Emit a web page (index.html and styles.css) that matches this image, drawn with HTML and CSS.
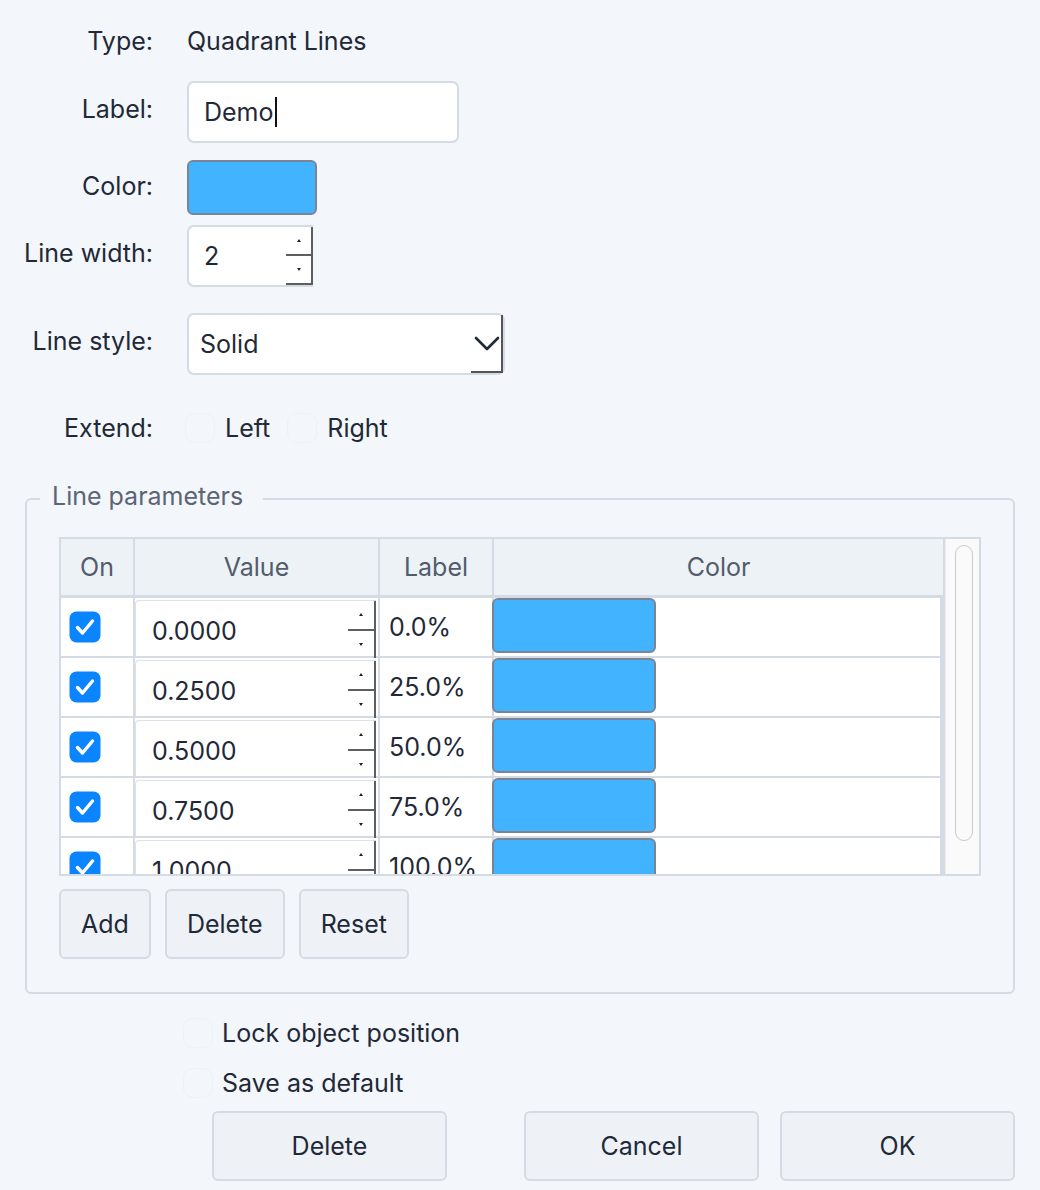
FILE: index.html
```html
<!DOCTYPE html>
<html>
<head>
<meta charset="utf-8">
<link rel="stylesheet" href="styles.css">
</head>
<body>
<div class="dialog">
  <div class="form">
    <div class="row r-type"><div class="lbl">Type:</div><div class="val">Quadrant Lines</div></div>
    <div class="row r-label"><div class="lbl">Label:</div><div class="textbox">Demo<span class="caret"></span></div></div>
    <div class="row r-color"><div class="lbl">Color:</div><div class="swatch big"></div></div>
    <div class="row r-width"><div class="lbl">Line width:</div>
      <div class="spinbox"><span class="num">2</span>
        <div class="spin"><div class="half"><span class="arr up"></span></div><div class="half"><span class="arr down"></span></div></div>
      </div>
    </div>
    <div class="row r-style"><div class="lbl">Line style:</div>
      <div class="select"><span>Solid</span>
        <div class="drop"><svg width="26" height="16" viewBox="0 0 26 16"><path d="M2 3 L13 14 L24 3" fill="none" stroke="#1f2937" stroke-width="2.6" stroke-linecap="round" stroke-linejoin="round"/></svg></div>
      </div>
    </div>
    <div class="row r-extend"><div class="lbl">Extend:</div>
      <div class="checks"><label class="chk"><span class="faint"></span>Left</label><label class="chk"><span class="faint"></span>Right</label></div>
    </div>
  </div>

  <fieldset class="params">
    <legend>Line parameters</legend>
    <div class="tablebox">
      <div class="tablemain">
        <div class="thead">
          <div class="th">On</div><div class="th">Value</div><div class="th">Label</div><div class="th">Color</div>
        </div>
        <div class="trow">
          <div class="c-on"><svg class="cb" width="32" height="32" viewBox="0 0 32 32"><rect x="0.5" y="0.5" width="31" height="31" rx="7" fill="#0b84ff"/><path d="M8.5 16.5 L13.5 22 L23.5 10" fill="none" stroke="#fff" stroke-width="3.4" stroke-linecap="round" stroke-linejoin="round"/></svg></div>
          <div class="c-val"><div class="vspin"><span class="num">0.0000</span><div class="spin"><div class="half"><span class="arr up"></span></div><div class="half"><span class="arr down"></span></div></div></div></div>
          <div class="c-lab">0.0%</div>
          <div class="c-col"><div class="swatch"></div></div>
        </div>
        <div class="trow">
          <div class="c-on"><svg class="cb" width="32" height="32" viewBox="0 0 32 32"><rect x="0.5" y="0.5" width="31" height="31" rx="7" fill="#0b84ff"/><path d="M8.5 16.5 L13.5 22 L23.5 10" fill="none" stroke="#fff" stroke-width="3.4" stroke-linecap="round" stroke-linejoin="round"/></svg></div>
          <div class="c-val"><div class="vspin"><span class="num">0.2500</span><div class="spin"><div class="half"><span class="arr up"></span></div><div class="half"><span class="arr down"></span></div></div></div></div>
          <div class="c-lab">25.0%</div>
          <div class="c-col"><div class="swatch"></div></div>
        </div>
        <div class="trow">
          <div class="c-on"><svg class="cb" width="32" height="32" viewBox="0 0 32 32"><rect x="0.5" y="0.5" width="31" height="31" rx="7" fill="#0b84ff"/><path d="M8.5 16.5 L13.5 22 L23.5 10" fill="none" stroke="#fff" stroke-width="3.4" stroke-linecap="round" stroke-linejoin="round"/></svg></div>
          <div class="c-val"><div class="vspin"><span class="num">0.5000</span><div class="spin"><div class="half"><span class="arr up"></span></div><div class="half"><span class="arr down"></span></div></div></div></div>
          <div class="c-lab">50.0%</div>
          <div class="c-col"><div class="swatch"></div></div>
        </div>
        <div class="trow">
          <div class="c-on"><svg class="cb" width="32" height="32" viewBox="0 0 32 32"><rect x="0.5" y="0.5" width="31" height="31" rx="7" fill="#0b84ff"/><path d="M8.5 16.5 L13.5 22 L23.5 10" fill="none" stroke="#fff" stroke-width="3.4" stroke-linecap="round" stroke-linejoin="round"/></svg></div>
          <div class="c-val"><div class="vspin"><span class="num">0.7500</span><div class="spin"><div class="half"><span class="arr up"></span></div><div class="half"><span class="arr down"></span></div></div></div></div>
          <div class="c-lab">75.0%</div>
          <div class="c-col"><div class="swatch"></div></div>
        </div>
        <div class="trow">
          <div class="c-on"><svg class="cb" width="32" height="32" viewBox="0 0 32 32"><rect x="0.5" y="0.5" width="31" height="31" rx="7" fill="#0b84ff"/><path d="M8.5 16.5 L13.5 22 L23.5 10" fill="none" stroke="#fff" stroke-width="3.4" stroke-linecap="round" stroke-linejoin="round"/></svg></div>
          <div class="c-val"><div class="vspin"><span class="num">1.0000</span><div class="spin"><div class="half"><span class="arr up"></span></div><div class="half"><span class="arr down"></span></div></div></div></div>
          <div class="c-lab">100.0%</div>
          <div class="c-col"><div class="swatch"></div></div>
        </div>
      </div>
      <div class="scrollbar"><div class="thumb"></div></div>
    </div>
    <div class="btnrow">
      <button class="btn">Add</button>
      <button class="btn">Delete</button>
      <button class="btn">Reset</button>
    </div>
  </fieldset>

  <div class="opts">
    <label class="opt"><span class="faint"></span><span class="otext">Lock object position</span></label>
    <label class="opt"><span class="faint"></span><span class="otext">Save as default</span></label>
  </div>

  <div class="footer">
    <button class="btn fbtn f-del">Delete</button>
    <button class="btn fbtn f-cancel">Cancel</button>
    <button class="btn fbtn">OK</button>
  </div>
</div>
</body>
</html>
```

FILE: styles.css
```css
* { box-sizing: border-box; }
html, body { margin: 0; padding: 0; }
body {
  background: #f3f6fa;
  font-family: Inter, "Noto Sans", "Liberation Sans", sans-serif;
  font-size: 25px;
  color: #1f2937;
  width: 1040px;
  height: 1190px;
  overflow: hidden;
}

.form { padding-top: 10px; }
.row {
  display: grid;
  grid-template-columns: 153px 1fr;
  column-gap: 34px;
  align-items: center;
}
.lbl { text-align: right; white-space: nowrap; padding-bottom: 6px; }
.r-type { height: 62px; }
.r-type .lbl { padding-bottom: 0; }
.r-label { height: 62px; margin-top: 9px; }
.r-color { height: 55px; margin-top: 17px; }
.r-color .lbl { padding-bottom: 4px; }
.r-width { height: 62px; margin-top: 10px; }
.r-style { height: 62px; margin-top: 26px; }
.r-extend { height: 40px; margin-top: 33px; }
.r-extend .lbl { padding-bottom: 0; }

.textbox {
  width: 272px;
  height: 62px;
  background: #fff;
  border: 2px solid #d5dbe5;
  border-radius: 7px;
  display: flex;
  align-items: center;
  padding-left: 15px;
}
.caret {
  display: inline-block;
  width: 2px;
  height: 30px;
  background: #111;
  margin-left: 1px;
}

.swatch {
  background: #42b4ff;
  border: 2px solid #7b8494;
  border-radius: 6px;
  width: 164px;
  height: 55px;
}
.swatch.big { width: 130px; }

.spinbox {
  width: 126px;
  height: 62px;
  background: #fff;
  border: 2px solid #d5dbe5;
  border-right: 0;
  border-radius: 7px 0 0 7px;
  display: flex;
}
.num { flex: 1; display: flex; align-items: center; padding-left: 15px; }
.spin {
  width: 27px;
  display: flex;
  flex-direction: column;
  border-right: 2px solid #5e5e5e;
}
.half {
  flex: 1;
  display: flex;
  align-items: center;
  justify-content: center;
  border-bottom: 2px solid #5e5e5e;
}
.arr {
  width: 0;
  height: 0;
  border-left: 2.5px solid transparent;
  border-right: 2.5px solid transparent;
}
.arr.up { border-bottom: 3px solid #222; }
.arr.down { border-top: 3px solid #222; }

.select {
  width: 318px;
  height: 62px;
  background: #fff;
  border: 2px solid #d5dbe5;
  border-radius: 7px;
  display: flex;
  align-items: center;
  padding-left: 11px;
}
.drop {
  margin-left: auto;
  width: 32px;
  height: 100%;
  border-right: 2px solid #555;
  border-bottom: 2px solid #555;
  display: flex;
  align-items: center;
  justify-content: center;
  padding-left: 2px;
}

.checks { display: flex; align-items: center; margin-left: -2px; }
.chk { display: flex; align-items: center; margin-right: 17px; }
.faint {
  display: inline-block;
  width: 30px;
  height: 30px;
  border-radius: 10px;
  background: #f3f6fa;
  border: 1px solid #eef1f5;
  margin-right: 10px;
}

.params {
  margin: 36px 25px 0;
  padding: 23px 32px 33px;
  border: 2px solid #d5dbe5;
  border-radius: 6px;
  min-width: 0;
}
.params legend {
  margin-left: -19px;
  padding: 0 20px 6px 12px;
  line-height: 24px;
  color: #5b6575;
}

.tablebox {
  height: 339px;
  border: 2px solid #d5dbe5;
  display: flex;
  background: #fff;
}
.tablemain { width: 884px; overflow: hidden; }
.thead, .trow {
  display: grid;
  grid-template-columns: 74px 245px 114px 451px;
}
.thead {
  height: 59px;
  border-bottom: 3px solid #d5dbe5;
  background: #edf2f7;
}
.th {
  border-right: 2px solid #d5dbe5;
  display: flex;
  align-items: center;
  justify-content: center;
  color: #525c6b;
}
.trow { height: 60px; }
.trow > div {
  border-right: 2px solid #d5dbe5;
  border-bottom: 2px solid #d5dbe5;
  background: #fff;
}
.trow > .c-col { border-right-width: 5px; }
.c-on { display: flex; align-items: center; padding-left: 8px; }
.c-val { display: flex; }
.vspin {
  flex: 1;
  display: flex;
  margin: 2px 2px 0 0;
  border-top: 1px solid #dde2ea;
  border-left: 1px solid #dde2ea;
  border-radius: 4px 0 0 0;
  background: #fff;
}
.vspin .num { padding-left: 16px; padding-top: 4px; }
.vspin .spin { width: 28px; margin-bottom: -2px; }
.vspin .half:last-child { border-bottom: 0; }
.c-lab { display: flex; align-items: center; padding-left: 9px; }
.c-col .swatch { margin-left: -2px; }

.scrollbar {
  width: 34px;
  background: #fafafa;
  border-left: 1px solid #ececec;
  padding: 6px 0 0 9px;
}
.thumb {
  width: 18px;
  height: 296px;
  border: 1.5px solid #c9c9c9;
  border-radius: 9px;
}

.btnrow { margin-top: 13px; display: flex; gap: 14px; }
.btn {
  height: 70px;
  padding: 0 20px;
  font: inherit;
  color: #1f2937;
  background: #eef2f7;
  border: 2px solid #d5dbe5;
  border-radius: 6px;
}

.opts { margin-top: 14px; }
.opt {
  height: 50px;
  display: flex;
  align-items: center;
  padding-left: 183px;
}
.opt .faint { margin-right: 9px; }

.footer {
  margin-top: 3px;
  display: flex;
  padding: 0 25px 0 212px;
}
.fbtn { width: 235px; }
.f-del { margin-right: auto; }
.f-cancel { margin-right: 21px; }
```
